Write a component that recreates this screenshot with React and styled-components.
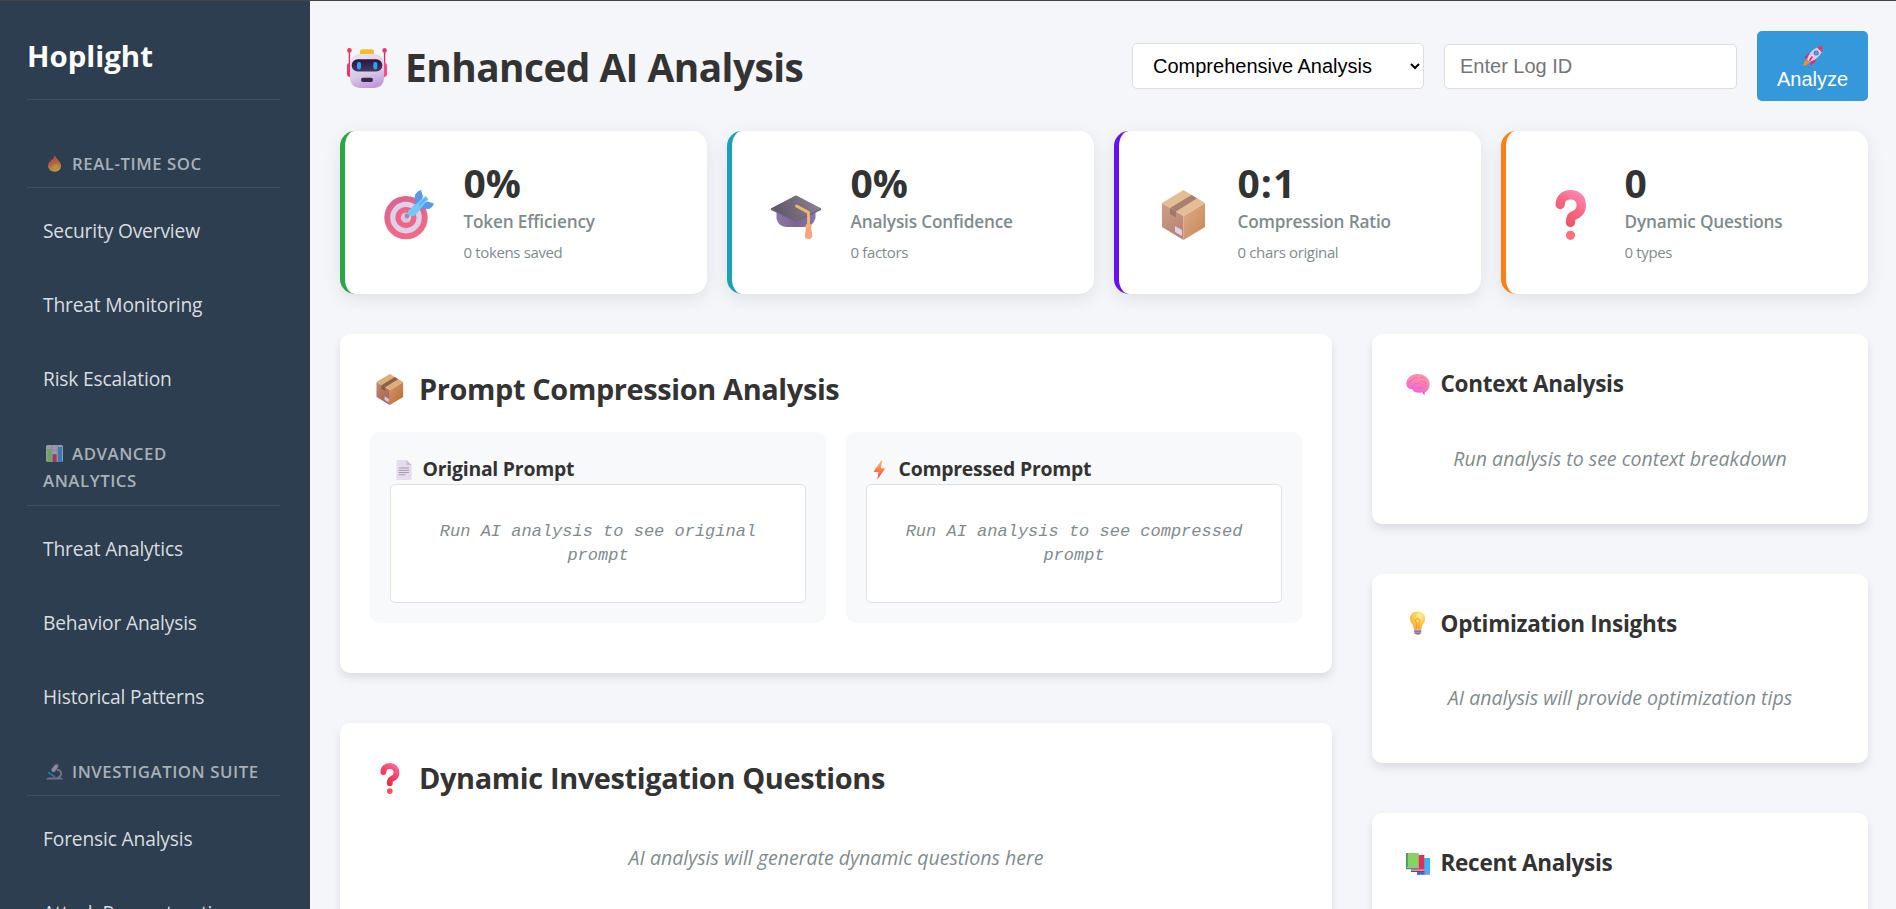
import React from "react";
import styled, { createGlobalStyle } from "styled-components";

const GlobalStyle = createGlobalStyle`
  *, *::before, *::after { box-sizing: border-box; }
  html, body { margin: 0; height: 100%; overflow: hidden; }
  body {
    background: #f5f6fa;
    color: #333;
    font-family: "Open Sans", "Noto Sans", sans-serif;
  }
`;

/* ---------- layout ---------- */

const Shell = styled.div`
  display: flex;
  height: 100vh;
  overflow: hidden;
  border-top: 1px solid #444;
`;

const Sidebar = styled.aside`
  flex: 0 0 310px;
  padding: 31px 30px 0 27px;
  background: #2c3e50;
  overflow: hidden;
`;

const Main = styled.main`
  flex: 1;
  min-width: 0;
  padding: 30px 28px 0 30px;
  overflow: hidden;
`;

/* ---------- sidebar ---------- */

const Brand = styled.div`
  padding-bottom: 18px;
  margin-bottom: 50px;
  border-bottom: 1px solid #3f5062;
  color: #fff;
  font-size: 29.4px;
  font-weight: 700;
  line-height: 49px;
`;

const NavSection = styled.section`
  margin-bottom: 24px;
`;

const NavHeading = styled.h3`
  margin: 0 0 6px;
  padding: 0 20px 10.3px 16px;
  border-bottom: 1px solid #3f5062;
  color: #a9b0b7;
  font-size: 16.8px;
  font-weight: 600;
  line-height: 27px;
  letter-spacing: 0.55px;
  text-transform: uppercase;

  svg {
    width: 17px;
    height: 17px;
    margin: 0 9px 0 3px;
    vertical-align: -2px;
    opacity: 0.7;
  }
`;

const NavItem = styled.a`
  display: block;
  padding: 22px 16px;
  color: #dadddf;
  font-size: 19.2px;
  line-height: 30px;
  letter-spacing: -0.16px;
`;

/* ---------- header ---------- */

const Header = styled.header`
  display: flex;
  align-items: center;
  justify-content: space-between;
  height: 70px;
  margin-bottom: 30px;
`;

const PageTitle = styled.h1`
  display: flex;
  align-items: center;
  gap: 18px;
  margin: 0;
  padding: 2px 0 0 7px;
  font-size: 38.8px;
  font-weight: 700;
  line-height: 52px;
  letter-spacing: -0.53px;

  svg {
    width: 40px;
    height: 40px;
    margin-top: 2px;
  }
`;

const Controls = styled.div`
  display: flex;
  align-items: center;
  gap: 20px;
`;

const Select = styled.select`
  width: 292px;
  height: 46px;
  padding: 10px 0 10px 16px;
  border: 1px solid #ddd;
  border-radius: 5px;
  background: #fff;
  color: #000;
  font: 20px "Liberation Sans", Arial, sans-serif;
`;

const Input = styled.input`
  width: 293px;
  height: 45px;
  padding: 10px 15px;
  border: 1px solid #ddd;
  border-radius: 5px;
  background: #fff;
  font: 20px "Liberation Sans", Arial, sans-serif;

  &::placeholder { color: #757575; }
`;

const AnalyzeButton = styled.button`
  display: flex;
  flex-direction: column;
  align-items: center;
  justify-content: center;
  gap: 2px;
  width: 111px;
  height: 70px;
  padding: 4px 0 0;
  border: 0;
  border-radius: 5px;
  background: #3498db;
  color: #fff;
  font: 20px/23px "Liberation Sans", Arial, sans-serif;

  svg {
    width: 20px;
    height: 20px;
  }
`;

/* ---------- metric cards ---------- */

const Metrics = styled.section`
  display: grid;
  grid-template-columns: repeat(4, 1fr);
  gap: 20px;
  margin-bottom: 40px;
`;

const MetricCard = styled.article`
  display: flex;
  align-items: center;
  gap: 29.5px;
  height: 163px;
  padding-left: 39px;
  border-left: 5px solid ${(p) => p.$accent};
  border-radius: 15px;
  background: #fff;
  box-shadow: 0 5px 18px rgba(0, 0, 0, 0.09);
`;

const MetricIcon = styled.span`
  display: flex;
  padding-top: 4px;
  opacity: 0.8;

  svg {
    width: 50px;
    height: 50px;
  }
`;

const MetricText = styled.div`
  display: flex;
  flex-direction: column;
  gap: 6px;
`;

const MetricValue = styled.div`
  font-size: 39px;
  font-weight: 700;
  line-height: 41px;
  letter-spacing: ${(p) => p.$tracking || 0}px;
`;

const MetricLabel = styled.div`
  color: #7f8c8d;
  font-size: 17.2px;
  font-weight: 600;
  line-height: 25px;
  letter-spacing: -0.17px;
`;

const MetricNote = styled.div`
  margin-top: 1px;
  color: #7f8c8d;
  font-size: 15px;
  line-height: 22px;
  letter-spacing: -0.36px;
`;

/* ---------- panels ---------- */

const Columns = styled.div`
  display: grid;
  grid-template-columns: 2fr 1fr;
  align-items: start;
  gap: 40px;
`;

const Column = styled.div`
  display: flex;
  flex-direction: column;
  gap: 50px;
  min-width: 0;
`;

const Panel = styled.section`
  padding: 30px;
  border-radius: 10px;
  background: #fff;
  box-shadow: 0 5px 10px rgba(0, 0, 0, 0.1);
`;

const PanelTitle = styled.h2`
  display: flex;
  align-items: center;
  gap: 14px;
  margin: 0 0 18px;
  padding-left: 4px;
  font-size: 28.9px;
  font-weight: 700;
  line-height: 50px;
  letter-spacing: -0.36px;

  svg {
    width: 31px;
    height: 31px;
  }
`;

const SideTitle = styled.h3`
  display: flex;
  align-items: center;
  gap: 10.5px;
  margin: 0 0 18px;
  padding-left: 4px;
  font-size: 22.5px;
  font-weight: 700;
  line-height: 40px;
  letter-spacing: -0.28px;

  svg {
    width: 24px;
    height: 24px;
    margin-bottom: 1px;
  }
`;

const EmptyNote = styled.p`
  margin: 0;
  padding: 21.5px 0 20px;
  color: #7f8c8d;
  font-size: 19.55px;
  font-style: italic;
  line-height: 30px;
  text-align: center;
`;

const PromptGrid = styled.div`
  display: grid;
  grid-template-columns: 1fr 1fr;
  gap: 20px;
  margin-bottom: 20px;
`;

const PromptBox = styled.div`
  padding: 21px 20px 20px;
  border-radius: 10px;
  background: #f8f9fa;
`;

const PromptTitle = styled.h4`
  display: flex;
  align-items: center;
  gap: 9px;
  margin: 0;
  padding-left: 3.5px;
  font-size: 19.4px;
  font-weight: 700;
  line-height: 31px;
  letter-spacing: -0.23px;

  svg {
    width: 20px;
    height: 20px;
    margin-top: 2px;
  }
`;

const PromptContent = styled.div`
  padding: 35px 30px 34px;
  border: 1px solid #dee2e6;
  border-radius: 5px;
  background: #fff;
  color: #7f8c8d;
  font: italic 17px/24px "Liberation Mono", "Courier New", monospace;
  text-align: center;
`;

/* ---------- icons ---------- */

const RobotIcon = () => (
  <svg viewBox="0 0 40 40">
    <defs>
      <linearGradient id="rbHead" x1="0.3" y1="0" x2="0.6" y2="1">
        <stop offset="0" stopColor="#ebe2ee" />
        <stop offset="0.6" stopColor="#d8c8e4" />
        <stop offset="1" stopColor="#bd98dc" />
      </linearGradient>
      <linearGradient id="rbVisor" x1="0" y1="0" x2="0" y2="1">
        <stop offset="0" stopColor="#2a1740" />
        <stop offset="1" stopColor="#463767" />
      </linearGradient>
    </defs>
    <path d="M2.4 2.5V16M37.6 2.5V16" stroke="#e0305f" strokeWidth="1.4" />
    <circle cx="2.4" cy="2.4" r="2.3" fill="#f0386b" />
    <circle cx="37.6" cy="2.4" r="2.3" fill="#f0386b" />
    <rect x="0" y="15" width="6" height="14" rx="2.4" fill="#f5326e" />
    <rect x="34" y="15" width="6" height="14" rx="2.4" fill="#ff4b8b" />
    <rect x="13" y="1.2" width="14" height="8" rx="2" fill="#fbb92f" />
    <rect x="3" y="6" width="34" height="34" rx="9.5" fill="url(#rbHead)" />
    <rect x="4.7" y="11.3" width="30.6" height="12.2" rx="6" fill="url(#rbVisor)" />
    <rect x="10" y="14" width="4" height="7.4" rx="1.9" fill="#29a3f2" />
    <rect x="26.3" y="14" width="4" height="7.4" rx="1.9" fill="#29a3f2" />
    <rect x="14" y="29.8" width="12" height="4.2" rx="2.1" fill="#38264f" />
  </svg>
);

const TargetIcon = () => (
  <svg viewBox="0 0 50 50">
    <defs>
      <linearGradient id="tgRing" x1="0" y1="0" x2="0.3" y2="1">
        <stop offset="0" stopColor="#cf3d76" />
        <stop offset="1" stopColor="#f0446a" />
      </linearGradient>
    </defs>
    <circle cx="22" cy="27.6" r="21.7" fill="url(#tgRing)" />
    <circle cx="22" cy="27.6" r="15.8" fill="#d4c8e2" />
    <circle cx="22" cy="27.6" r="10.6" fill="#ee3d6c" />
    <circle cx="22" cy="27.6" r="5.2" fill="#cdbcdc" />
    <circle cx="23" cy="26" r="2.4" fill="#85708f" />
    <path d="M24.5 21.5 31.5 14 30.8 5.5Q33 1 37 0L39 6.5 35 16ZM29 25.5 36 18.5 45 19Q48.5 17.5 50 13.5L43.5 11.5 34 15Z" fill="#2f7fe6" />
    <path d="M25 20 41.5 6 44.5 9 31.5 25Q28 27.5 25 25Q22.5 22.5 25 20Z" fill="#4fbcf5" />
    <path d="M35 15.5 42 8.5" stroke="#2f93ea" strokeWidth="1.2" />
  </svg>
);

const CapIcon = () => (
  <svg viewBox="0 0 50 50">
    <defs>
      <linearGradient id="gcBase" x1="0" y1="0" x2="1" y2="0">
        <stop offset="0" stopColor="#6f558f" />
        <stop offset="0.5" stopColor="#5a3f7a" />
        <stop offset="1" stopColor="#6d5496" />
      </linearGradient>
      <linearGradient id="gcTop" x1="0" y1="0.5" x2="1" y2="0.3">
        <stop offset="0" stopColor="#372d3f" />
        <stop offset="1" stopColor="#70617d" />
      </linearGradient>
    </defs>
    <path d="M5.5 20V29Q8 37 16 37H33Q42 37 44.5 28V20Z" fill="url(#gcBase)" />
    <path d="M25 5.5 50 18.5V20L25 32 0 20V18.5Z" fill="#4d3c5c" />
    <path d="M25 5.5 50 18.5 25 30.5 0 18.5Z" fill="url(#gcTop)" />
    <path d="M25.5 16 37.5 22.5V36" fill="none" stroke="#f0aa3c" strokeWidth="2.8" strokeLinecap="round" strokeLinejoin="round" />
    <circle cx="37.5" cy="36.5" r="3" fill="#f79a48" />
    <path d="M35 37.5H40L41.3 46Q41.3 49 37.5 49Q33.8 49 33.8 46Z" fill="#fd8c62" />
  </svg>
);

const PackageIcon = ({ id }) => (
  <svg viewBox="0 0 50 50">
    <defs>
      <linearGradient id={`${id}L`} x1="0" y1="0" x2="0.5" y2="1">
        <stop offset="0" stopColor="#c08a6c" />
        <stop offset="1" stopColor="#aa6451" />
      </linearGradient>
      <linearGradient id={`${id}R`} x1="0" y1="0" x2="0.8" y2="1">
        <stop offset="0" stopColor="#d8966f" />
        <stop offset="1" stopColor="#ba6f2f" />
      </linearGradient>
    </defs>
    <path d="M4 13 25.5 26V50L4 37Z" fill={`url(#${id}L)`} />
    <path d="M47 13 25.5 26V50L47 37Z" fill={`url(#${id}R)`} />
    <path d="M25.5 0 47 13 25.5 26 4 13Z" fill="#dcae78" />
    <path d="M12 18 33.5 5 39 8.3 18 21.5Z" fill="#935f4d" />
    <path d="M12 18 18 21.5V27.5L12 24Z" fill="#83584d" />
    <path d="M17 36 24 40V46L17 42Z" fill="#dac5e4" />
  </svg>
);

const QuestionIcon = ({ id }) => (
  <svg viewBox="0 0 50 50">
    <defs>
      <linearGradient id={id} gradientUnits="userSpaceOnUse" x1="38" y1="4" x2="18" y2="34">
        <stop offset="0" stopColor="#ff6aa6" />
        <stop offset="0.5" stopColor="#f5405f" />
        <stop offset="1" stopColor="#e62b45" />
      </linearGradient>
    </defs>
    <path d="M15.2 14.5C15.2 8.2 20 4.8 25.7 4.8C32.2 4.8 36.3 9 36.3 15.2C36.3 21 32.5 24.3 28.5 25.6C26 26.5 25.5 28 25.5 32.5" fill="none" stroke={`url(#${id})`} strokeWidth="9.4" strokeLinecap="round" />
    <circle cx="25.5" cy="45.3" r="4.6" fill="#fb4d5c" />
  </svg>
);

const RocketIcon = () => (
  <svg viewBox="0 0 20 20">
    <path d="M7.5 7.5Q3 7.5 1.3 13L6 12ZM12.5 12.5Q13 17 7.5 19.3L8 14Z" fill="#e92b62" />
    <path d="M3.2 13.5Q.5 15.5.3 20Q4.8 19 6.5 16.8Z" fill="#fb8b2a" />
    <path d="M4 13.5Q6.5 5 14 1.4L18.7 6Q15 13.5 6.5 16Z" fill="#dccfe2" />
    <path d="M14 1.4Q17 .1 19.6.3Q20 3.2 18.7 6Z" fill="#f0365f" />
    <circle cx="13.2" cy="7" r="2.5" fill="#3d6fb8" />
    <circle cx="13.2" cy="7" r="1.5" fill="#5ab2f1" />
    <path d="M9 11 6.8 14.3" stroke="#e02b63" strokeWidth="1.6" strokeLinecap="round" />
  </svg>
);

const DocumentIcon = () => (
  <svg viewBox="0 0 20 20">
    <path d="M2.5 0H12.5L17.5 5V20H2.5Z" fill="#e6dcf0" />
    <path d="M12.5 0 17.5 5H12.5Z" fill="#c8bcd0" />
    <path d="M4.7 8H15M4.7 10.3H15M4.7 12.5H15M4.7 14.7H11.5" stroke="#a99ab4" strokeWidth="1" />
  </svg>
);

const BoltIcon = () => (
  <svg viewBox="0 0 20 20">
    <defs>
      <linearGradient id="bolt" x1="0" y1="0" x2="0" y2="1">
        <stop offset="0" stopColor="#ffbf5b" />
        <stop offset="0.6" stopColor="#fc7049" />
        <stop offset="1" stopColor="#f0407a" />
      </linearGradient>
    </defs>
    <path d="M11.5.3 3.8 11.2Q3.6 11.9 4.3 11.9H8.5L7.4 19.6L14.8 9Q15 8.3 14.3 8.3H10.8L12.2.5Z" fill="url(#bolt)" />
  </svg>
);

const BrainIcon = () => (
  <svg viewBox="0 0 24 24">
    <defs>
      <linearGradient id="brain" x1="0.7" y1="0" x2="0.3" y2="1">
        <stop offset="0" stopColor="#fd9aa4" />
        <stop offset="0.5" stopColor="#f97fb9" />
        <stop offset="1" stopColor="#f660e4" />
      </linearGradient>
    </defs>
    <path d="M16 19.5 18.3 23.6 18.9 19Z" fill="#e8479f" />
    <path d="M.3 12.5Q-.3 8.5 3 5.500Q6 2 11 2Q16 1.7 19 4Q23 6.5 23.6 11Q24 15.5 21.5 18.2Q19.5 21.3 15.5 20.3Q12 21.5 9 20Q6.5 18.5 6.6 17.3Q1 17 .3 12.5Z" fill="url(#brain)" />
    <path d="M2.5 11.5Q4 7.5 7.5 7Q8.5 5 11 5.5M7 17Q5.5 13.5 9 11.5Q12 12.5 14.5 10M14 5.5Q17 4.5 18.5 7M15 9.5Q18.5 8.5 20.5 11.5M10.5 15.8H17" fill="none" stroke="#e45fae" strokeWidth="0.7" />
  </svg>
);

const BulbIcon = () => (
  <svg viewBox="0 0 24 24">
    <defs>
      <radialGradient id="bulb" cx="0.65" cy="0.25" r="0.8">
        <stop offset="0" stopColor="#fff3a3" />
        <stop offset="0.5" stopColor="#fdcb4c" />
        <stop offset="1" stopColor="#f9a83b" />
      </radialGradient>
    </defs>
    <path d="M11.5.5Q19.2.8 19.2 8Q19 11.5 16.5 14L15.3 18.5H8L6.8 14Q4 11.5 4 8Q4.3.7 11.5.5Z" fill="url(#bulb)" />
    <path d="M10.5 18V12Q7.5 8.5 11.7 7.5Q15.7 8.5 13 12V18" fill="none" stroke="#eb9427" strokeWidth="0.8" />
    <path d="M8.2 18.5H15.2V22Q14 24 11.7 24Q9.5 24 8.2 22Z" fill="#b29ac2" />
    <path d="M8 20.3H15.3M8.8 22.3H14.5" stroke="#82639b" strokeWidth="0.9" />
  </svg>
);

const BooksIcon = () => (
  <svg viewBox="0 0 24 24">
    <path d="M11 7H24V23.5H11Z" fill="#39b6f5" />
    <path d="M11 21.7H24V23.7H11Z" fill="#9c8fdb" />
    <path d="M11 20.8H18.5V23.7H11Z" fill="#2d75d4" />
    <path d="M5 4H18.3V20.8H5Z" fill="#e32b62" />
    <path d="M5 18.3H18.3V20H5Z" fill="#cf9ab9" />
    <path d="M5 20H18.3V21H5Z" fill="#c41d54" />
    <path d="M0 2H12.8V18H0Z" fill="#86d263" />
    <path d="M0 2H1.8V18H0Z" fill="#3f9c62" />
    <path d="M.7 15.8H12.8V17.2H.7Z" fill="#a9b3bb" />
    <path d="M0 17.2H12.8V18.2H0Z" fill="#3c8d68" />
  </svg>
);

const FireIcon = () => (
  <svg viewBox="0 0 17 17">
    <defs>
      <linearGradient id="fire" x1="0.3" y1="0" x2="0.6" y2="1">
        <stop offset="0" stopColor="#e8453f" />
        <stop offset="0.5" stopColor="#f2703a" />
        <stop offset="1" stopColor="#fbc93e" />
      </linearGradient>
    </defs>
    <path d="M8.3.4Q9.5.5 10.3 2.7Q11.5 4.5 13.5 6.5Q15.3 9 15 11.5Q14.3 16.5 8.8 16.7Q2.5 16.5 2 11Q2 8 3.8 6.2L4.5 7.2L5 4L6 5.2Q7.8 3 8.3.4Z" fill="url(#fire)" />
    <path d="M9 15.8Q5.8 15.5 6 12.5Q7 9 10 8.5Q12.8 10.5 12.5 13Q12 15.5 9 15.8Z" fill="#f5b93d" opacity="0.7" />
  </svg>
);

const ChartIcon = () => (
  <svg viewBox="0 0 17 17">
    <rect width="17" height="17" rx="1.5" fill="#cabfd3" />
    <path d="M5.7 0V17M11.3 0V17M0 5H17" stroke="#aa9db8" strokeWidth="0.7" />
    <rect x="1.3" y="4" width="3.8" height="13" fill="#7fd75b" />
    <rect x="6.6" y="9.2" width="4" height="7.8" fill="#dd2d67" />
    <rect x="12" y="2" width="4" height="15" fill="#3897e0" />
  </svg>
);

const MicroscopeIcon = () => (
  <svg viewBox="0 0 17 17">
    <path d="M10.5 6.5Q15.5 7 15 11Q14.7 14 11.5 15" fill="none" stroke="#91879e" strokeWidth="2" />
    <path d="M5.3 6.2 10 .8 12.5 3.2 8.5 9 6 8.7Z" fill="#b8aac6" />
    <path d="M9.5 1.8 12 .5 12.7 3.4Z" fill="#82758f" />
    <path d="M2 9.3 9 13.8" stroke="#3690dc" strokeWidth="1.5" />
    <path d="M0 16.5Q.5 14.5 3 14.5H14Q16.5 14.5 17 16.5Z" fill="#9286a0" />
  </svg>
);

/* ---------- content ---------- */

const navigation = [
  { icon: <FireIcon />, title: "Real-Time SOC", items: ["Security Overview", "Threat Monitoring", "Risk Escalation"] },
  { icon: <ChartIcon />, title: "Advanced Analytics", items: ["Threat Analytics", "Behavior Analysis", "Historical Patterns"] },
  { icon: <MicroscopeIcon />, title: "Investigation Suite", items: ["Forensic Analysis", "Attack Reconstruction"] },
];

const metrics = [
  { accent: "#28a745", icon: <TargetIcon />, value: "0%", label: "Token Efficiency", note: "0 tokens saved" },
  { accent: "#17a2b8", icon: <CapIcon />, value: "0%", label: "Analysis Confidence", note: "0 factors" },
  { accent: "#6610f2", icon: <PackageIcon id="pkgMetric" />, value: "0:1", tracking: 1, label: "Compression Ratio", note: "0 chars original" },
  { accent: "#fd7e14", icon: <QuestionIcon id="qMetric" />, value: "0", label: "Dynamic Questions", note: "0 types" },
];

const sidePanels = [
  { icon: <BrainIcon />, title: "Context Analysis", note: "Run analysis to see context breakdown" },
  { icon: <BulbIcon />, title: "Optimization Insights", note: "AI analysis will provide optimization tips" },
  { icon: <BooksIcon />, title: "Recent Analysis", note: "" },
];

export default function App() {
  return (
    <>
      <GlobalStyle />
      <Shell>
        <Sidebar>
          <Brand>Hoplight</Brand>
          {navigation.map((section) => (
            <NavSection key={section.title}>
              <NavHeading>
                {section.icon}
                {section.title}
              </NavHeading>
              {section.items.map((item) => (
                <NavItem key={item}>{item}</NavItem>
              ))}
            </NavSection>
          ))}
        </Sidebar>

        <Main>
          <Header>
            <PageTitle>
              <RobotIcon />
              Enhanced AI Analysis
            </PageTitle>
            <Controls>
              <Select defaultValue="comprehensive">
                <option value="comprehensive">Comprehensive Analysis</option>
              </Select>
              <Input type="text" placeholder="Enter Log ID" />
              <AnalyzeButton>
                <RocketIcon />
                Analyze
              </AnalyzeButton>
            </Controls>
          </Header>

          <Metrics>
            {metrics.map((m) => (
              <MetricCard key={m.label} $accent={m.accent}>
                <MetricIcon>{m.icon}</MetricIcon>
                <MetricText>
                  <MetricValue $tracking={m.tracking}>{m.value}</MetricValue>
                  <MetricLabel>{m.label}</MetricLabel>
                  <MetricNote>{m.note}</MetricNote>
                </MetricText>
              </MetricCard>
            ))}
          </Metrics>

          <Columns>
            <Column>
              <Panel>
                <PanelTitle>
                  <PackageIcon id="pkgPanel" />
                  Prompt Compression Analysis
                </PanelTitle>
                <PromptGrid>
                  <PromptBox>
                    <PromptTitle>
                      <DocumentIcon />
                      Original Prompt
                    </PromptTitle>
                    <PromptContent>Run AI analysis to see original prompt</PromptContent>
                  </PromptBox>
                  <PromptBox>
                    <PromptTitle>
                      <BoltIcon />
                      Compressed Prompt
                    </PromptTitle>
                    <PromptContent>Run AI analysis to see compressed prompt</PromptContent>
                  </PromptBox>
                </PromptGrid>
              </Panel>
              <Panel>
                <PanelTitle>
                  <QuestionIcon id="qPanel" />
                  Dynamic Investigation Questions
                </PanelTitle>
                <EmptyNote>AI analysis will generate dynamic questions here</EmptyNote>
              </Panel>
            </Column>
            <Column>
              {sidePanels.map((panel) => (
                <Panel key={panel.title}>
                  <SideTitle>
                    {panel.icon}
                    {panel.title}
                  </SideTitle>
                  <EmptyNote>{panel.note}</EmptyNote>
                </Panel>
              ))}
            </Column>
          </Columns>
        </Main>
      </Shell>
    </>
  );
}
